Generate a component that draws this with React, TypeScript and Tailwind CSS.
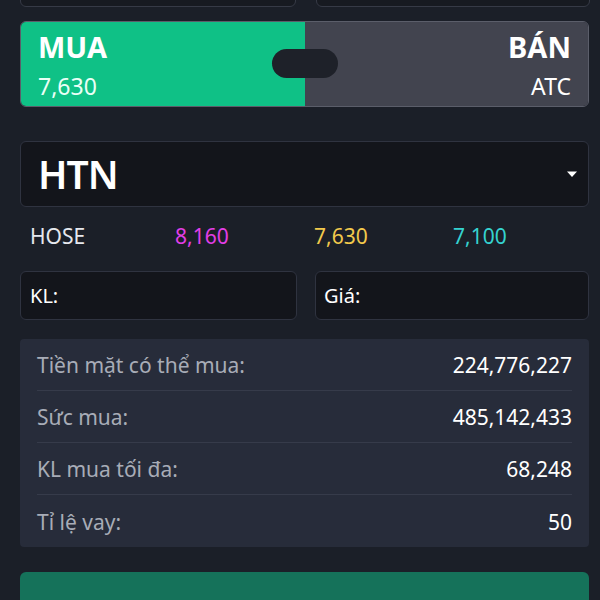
import { useState } from 'react';

const infoRows = [
	{ label: 'Tiền mặt có thể mua:', value: '224,776,227' },
	{ label: 'Sức mua:', value: '485,142,433' },
	{ label: 'KL mua tối đa:', value: '68,248' },
	{ label: 'Tỉ lệ vay:', value: '50' },
];

const App = () => {
	const [side] = useState<'buy' | 'sell'>('buy');

	return (
		<div className="w-[600px] h-[600px] overflow-hidden bg-[#1b1f28] pl-5 pr-[11px] text-white font-['Noto_Sans',sans-serif]">
			{/* previous inputs, cut off at the top */}
			<div className="-mt-[33px] grid grid-cols-[276px_274px] gap-x-5">
				<div className="h-10 rounded-md border border-[#363a46] bg-[#171a21]" />
				<div className="h-10 rounded-md border border-[#363a46] bg-[#171a21]" />
			</div>

			{/* buy / sell toggle */}
			<div className="relative mt-[14px] flex h-[86px] overflow-hidden rounded-md border border-[#5b5e6a]">
				<div
					className={`flex w-[284px] flex-col pl-[17px] pt-[8px] ${
						side === 'buy' ? 'bg-[#0fc186]' : 'bg-[#42444f]'
					}`}
				>
					<span className="text-[29px] font-bold leading-[34px]">MUA</span>
					<span className="mt-[7px] text-[23px] leading-[30px] text-[#eafff6]">7,630</span>
				</div>
				<div className="flex flex-1 flex-col items-end bg-[#42444f] pr-[17px] pt-[8px]">
					<span className="text-[29px] font-bold leading-[34px]">BÁN</span>
					<span className="mt-[7px] text-[23px] leading-[30px]">ATC</span>
				</div>
				<div className="absolute left-[251px] top-[27px] h-[29px] w-[66px] rounded-full bg-[#1e2129]" />
			</div>

			{/* symbol select */}
			<div className="mt-[34px] flex h-[66px] items-center justify-between rounded-md border border-[#2f3340] bg-[#13151b] pl-[17px] pr-[10px]">
				<span className="text-[39px] font-semibold tracking-tight">HTN</span>
				<svg width="12" height="8" viewBox="0 0 12 8">
					<path d="M1 1.5h10L6 7z" fill="#ffffff" />
				</svg>
			</div>

			{/* exchange & prices */}
			<div className="grid h-[64px] grid-cols-[145px_139px_139px_1fr] items-center pb-[5px] pl-[10px] text-[21px]">
				<span className="text-[#e6e8ee]">HOSE</span>
				<span className="text-[#e23ee6]">8,160</span>
				<span className="text-[#f2c94c]">7,630</span>
				<span className="text-[#35d3d1]">7,100</span>
			</div>

			{/* quantity & price inputs */}
			<div className="grid grid-cols-[277px_274px] gap-x-[18px]">
				<div className="flex h-[49px] items-center rounded-md border border-[#2f3340] bg-[#13151b] pl-[9px] text-[20px]">
					KL:
				</div>
				<div className="flex h-[49px] items-center rounded-md border border-[#2f3340] bg-[#13151b] pl-[8px] text-[20px]">
					Giá:
				</div>
			</div>

			{/* account info */}
			<div className="mt-[19px] rounded-sm bg-[#272c3a] px-[17px]">
				{infoRows.map((row, i) => (
					<div
						key={row.label}
						className={`flex h-[52px] items-center justify-between pt-[3px] text-[21px] ${
							i < infoRows.length - 1 ? 'border-b border-[#363b4a]' : ''
						}`}
					>
						<span className="text-[#a8acb7]">{row.label}</span>
						<span className="text-white">{row.value}</span>
					</div>
				))}
			</div>

			{/* submit */}
			<div className="mt-[25px] h-[60px] rounded-md bg-[#15725a]" />
		</div>
	);
};

export default App;
